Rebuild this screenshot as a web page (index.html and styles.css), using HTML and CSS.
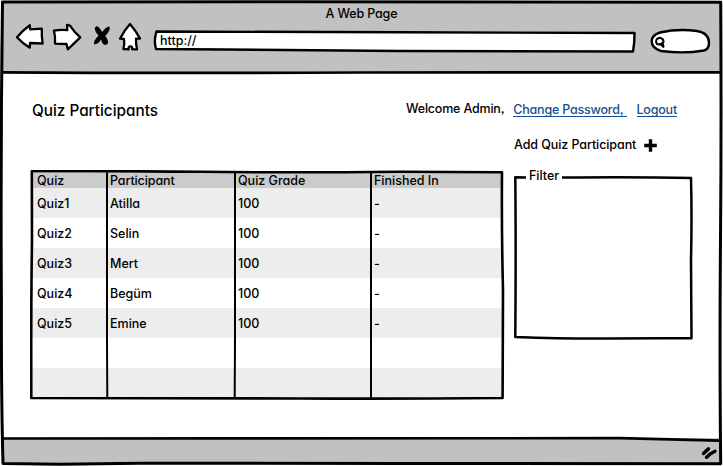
FILE: index.html
```
<!DOCTYPE html>
<html lang="en">
<head>
<meta charset="utf-8">
<title>Quiz Participants</title>
<link rel="stylesheet" href="styles.css">
</head>
<body>
<div class="window">
  <header class="chrome">
    <div class="window-title"><span class="t-title">A Web Page</span></div>
    <div class="toolbar">
      <svg class="nav-icons" width="128" height="30" viewBox="15 22 128 30">
        <g fill="#fff" stroke="#000" stroke-width="2.300" stroke-linejoin="round">
          <path d="M17 37.3 Q22 31 29.8 25.3 L30.2 29.3 L41.8 28.6 Q41.5 36 42.6 43.5 L30 43 L29.8 47.7 Q22.5 43.5 17 37.3Z"/>
          <path d="M54 30.7 Q60 29.5 67.3 30.2 L67 25 L70 25.6 Q74.5 32.5 80.3 37.3 L67.8 49.3 L66.5 44 L55 43.6 Q55.500 37 54 30.700Z"/>
          <path d="M130 24 Q136 31 140 38.500 L136 38.600 Q135.800 44 137 49.300 L132.200 49.300 Q132.500 46.300 130.500 46.300 Q128.200 46.300 128.600 49.300 L123.400 49 Q124.800 44 124 39 L120 38.700 Q124.500 30 130 24Z"/>
        </g>
        <path d="M94.700 28 Q97 24.500 99.700 28.500 L102.500 32 Q105 27 109.700 26.500 Q110.500 31 105 36 Q108.300 39 108 43.500 Q104.500 46.800 102.300 42.800 L101 39.500 Q98.500 44 94.300 44.500 Q93 41 98.500 35.500 Q94.800 31.500 94.700 28Z"/>
      </svg>
      <div class="address">
        <svg class="outline" width="483" height="24" viewBox="153 29 483 24">
          <path d="M156.500 31.500 L400 32.300 L634.500 33 Q634.600 43 633 51.500 L400 51 L156 49 Q153.500 40 156.500 31.500Z" fill="#fff" stroke="#000" stroke-width="2.400" stroke-linejoin="round"/>
        </svg>
        <span class="t-url">http://</span>
      </div>
      <svg class="search" width="62" height="27" viewBox="649 27 62 27">
        <path d="M660 32.500 Q678 28.500 697 31 Q709 33 709 43 Q709 49 704 50.500 Q684 54 661 51 Q651.500 48 651.700 41 Q652 35 660 32.500Z" fill="#fff" stroke="#000" stroke-width="2.400"/>
        <path d="M659.500 37.800 Q663.800 38.500 663.500 42 Q660.500 45.500 656.800 43.800 Q654.500 39 659.500 37.800Z M660.500 44 L664 47.500 M662.500 42.500 L663.500 46.500" fill="none" stroke="#000" stroke-width="2"/>
      </svg>
    </div>
  </header>

  <main class="page">
    <div class="top">
      <h1 class="heading"><span class="t-heading">Quiz Participants</span></h1>
      <nav class="account">
        <span class="t-welcome">Welcome Admin,</span>
        <a class="t-change">Change Password,&nbsp;</a>
        <a class="t-logout">Logout</a>
      </nav>
    </div>
    <div class="content">
      <div class="grid">
        <div class="row head"><span>Quiz</span><span class="t-part">Participant</span><span class="t-grade">Quiz Grade</span><span class="t-fin">Finished In</span></div>
        <div class="row"><span>Quiz1</span><span>Atilla</span><span>100</span><span>-</span></div>
        <div class="row"><span>Quiz2</span><span>Selin</span><span>100</span><span>-</span></div>
        <div class="row"><span>Quiz3</span><span>Mert</span><span>100</span><span>-</span></div>
        <div class="row"><span>Quiz4</span><span>Begüm</span><span>100</span><span>-</span></div>
        <div class="row"><span>Quiz5</span><span>Emine</span><span>100</span><span>-</span></div>
        <div class="row"></div>
        <div class="row"></div>
        <svg class="outline" width="475" height="230" viewBox="30 170 475 230">
          <g fill="none" stroke="#000" stroke-width="2.600" stroke-linejoin="round" stroke-linecap="round">
            <path d="M31.800 171.300 Q110 170.800 200 171.800 T400 171.700 L502 172.200 Q501.500 230 503 290 L502.600 398 Q400 399 300 398.500 T31.300 398 Q31 300 32 240Z"/>
            <path d="M107 173 V340 L107.300 398 M235 173 V340 L234.700 397 M371 173 V398" stroke-width="2"/>
          </g>
        </svg>
      </div>
      <aside class="side">
        <div class="add">
          <span class="t-add">Add Quiz Participant</span>
          <svg width="13" height="13" viewBox="0 0 13 13"><path d="M6.500 .2 V12.800 M.2 6.500 H12.800" stroke="#000" stroke-width="3.400"/></svg>
        </div>
        <div class="filter">
          <svg class="outline" width="180" height="166" viewBox="513 175 180 166">
            <path d="M526 177.500 L515.300 177.300 Q516 250 515.300 337 Q570 339 610 338.500 T691.500 338.300 L691 260 Q692 215 691 178 Q640 176.800 562 177.500" fill="none" stroke="#000" stroke-width="2.500" stroke-linejoin="round"/>
          </svg>
          <span class="t-filter">Filter</span>
        </div>
      </aside>
    </div>
  </main>

  <footer class="status">
    <svg width="18" height="14" viewBox="700 446 18 14"><path d="M703.500 453.500 L708.500 448.800 M706.500 457.300 Q710 453.500 715 451.300" stroke="#000" stroke-width="3.400" stroke-linecap="round" fill="none"/></svg>
  </footer>

  <svg class="outline" width="723" height="466" viewBox="0 0 723 466">
    <g fill="none" stroke="#000" stroke-width="3" stroke-linejoin="round">
      <path d="M2.500 2 L300 1.800 L720.700 2.200 Q721.500 120 720.500 240 T720.700 463.800 L400 463.500 L140 463.200 L60 464.300 L3 463.500 Q1.200 400 1.400 300 Q.5 150 2.500 2Z"/>
      <path d="M2 72.300 Q160 73.300 360 72.500 T720 72.300 M2 438.500 L620 438.200 L720 440.600" stroke-width="2.700"/>
    </g>
  </svg>
</div>
</body>
</html>
```
FILE: styles.css
```
* { box-sizing: border-box; }
body {
  margin: 0;
  background: #fff;
  color: #000;
  font: 450 12.500px/16px Inter, "Open Sans", sans-serif;
  font-feature-settings: "cv11" 1, "ss03" 1;
}
svg { display: block; flex: none; }
span, a { white-space: nowrap; }
.window {
  position: relative;
  width: 723px;
  height: 466px;
  display: flex;
  flex-direction: column;
  padding: 2px;
  overflow: hidden;
}
.outline { position: absolute; pointer-events: none; }
.window > .outline { left: 0; top: 0; }

.chrome { height: 71px; background: #c1c1c1; }
.window-title { height: 20px; padding-top: 4px; text-align: center; letter-spacing: -.15px; }
.toolbar { display: flex; padding-left: 13px; }
.address {
  position: relative;
  width: 483px;
  height: 24px;
  margin: 7px 0 0 10px;
  padding: 4px 0 0 7px;
}
.address .outline { left: 0; top: 0; }
.address span { position: relative; }
.search { margin: 5px 0 0 13px; }

.page { flex: 1; padding: 28px 0 0 30px; background: #fff; }
.top { display: flex; justify-content: space-between; height: 36px; padding-right: 44px; }
.heading { margin: 0; padding-top: 1px; font-size: 15.300px; line-height: 18px; font-weight: 450; }
.account { display: flex; letter-spacing: -.2px; }
.account a {
  height: 16px;
  line-height: 17px;
  color: #17508f;
  border-bottom: 1px solid #17508f;
}
.t-change { margin-left: 9px; }
.t-logout { margin-left: 10px; }

.content { display: flex; gap: 10px; }
.grid { position: relative; width: 471px; margin-top: 36px; }
.grid > .outline { left: -2px; top: -3px; }
.row {
  display: grid;
  grid-template-columns: 73px 128px 136px 134px;
  height: 30px;
  line-height: 30px;
  padding-top: 1px;
}
.row:nth-child(even) { background: #ededed; }
.row.head { height: 15px; padding-top: 0; line-height: 15px; background: #cbcbcb; }
.row span { padding-left: 5px; }
.t-part { letter-spacing: -.1px; }

.side { width: 180px; }
.add { height: 16px; padding-left: 1px; display: flex; align-items: center; gap: 8px; letter-spacing: -.08px; }
.filter { position: relative; height: 166px; margin-top: 22px; padding-left: 16px; }
.filter .outline { left: 0; top: 0; }
.t-filter { position: relative; top: -7px; }

.status {
  height: 26px;
  background: #c1c1c1;
  display: flex;
  justify-content: flex-end;
  padding: 8px 3px 0 0;
}
```
